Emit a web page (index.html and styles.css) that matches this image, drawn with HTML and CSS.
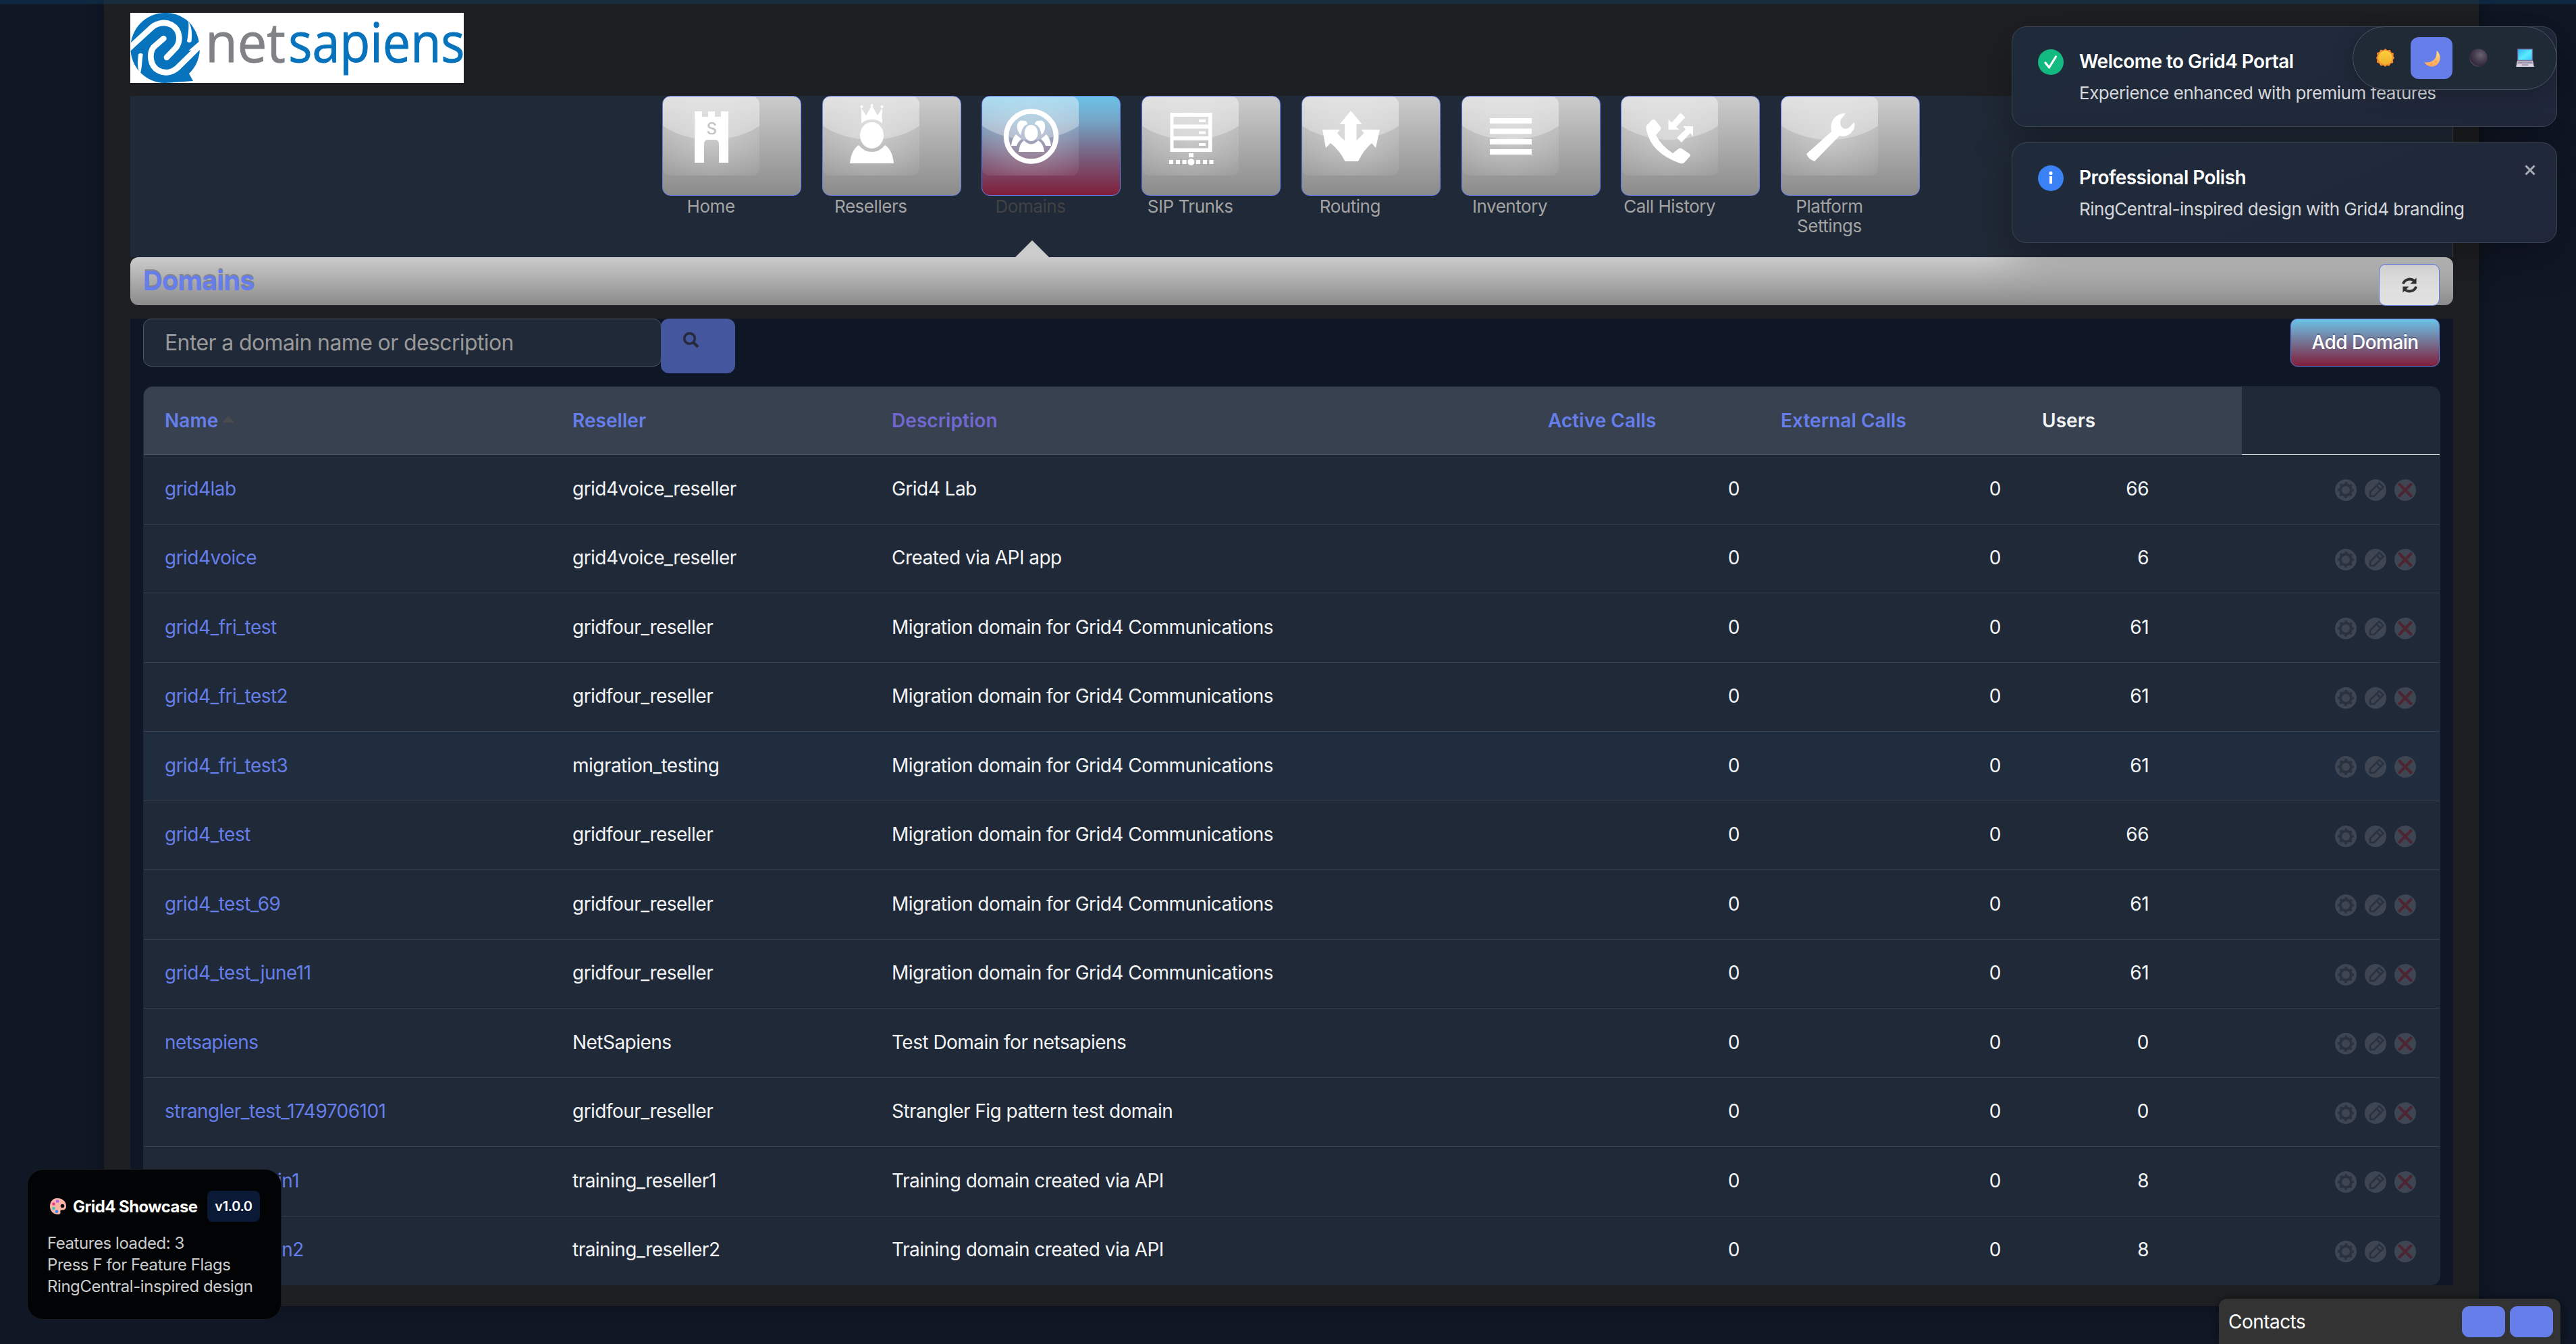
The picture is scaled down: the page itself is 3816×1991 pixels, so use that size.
FILE: index.html
```
<!DOCTYPE html>
<html lang="en">
<head>
<meta charset="utf-8">
<title>Domains</title>
<link rel="stylesheet" href="styles.css">
</head>
<body>
<svg class="defs" aria-hidden="true">
  <defs>
    <linearGradient id="gloss-top" x1="0" y1="0" x2="0" y2="1"><stop offset="0" stop-color="#fff" stop-opacity=".54"/><stop offset="1" stop-color="#fff" stop-opacity=".3"/></linearGradient>
    <radialGradient id="gloss-glow" cx=".5" cy=".55" r=".6"><stop offset="0" stop-color="#fff" stop-opacity=".32"/><stop offset="1" stop-color="#fff" stop-opacity=".07"/></radialGradient>
    <clipPath id="gloss-clip"><rect width="143" height="117" rx="11"/></clipPath>
    <clipPath id="logo-clip"><rect width="1482" height="312"/></clipPath>
    <linearGradient id="moon-fill" x1="0" y1="0" x2="0" y2="1"><stop offset="0" stop-color="#ffe27a"/><stop offset="1" stop-color="#ffa35c"/></linearGradient>
    <linearGradient id="screen-fill" x1="0" y1="0" x2="1" y2="1"><stop offset="0" stop-color="#2fb4f5"/><stop offset=".55" stop-color="#5ceaff"/><stop offset="1" stop-color="#39c8fb"/></linearGradient>
    <linearGradient id="sun-fill" x1="0" y1="0" x2="0" y2="1"><stop offset="0" stop-color="#ffcf3c"/><stop offset="1" stop-color="#eeb02c"/></linearGradient>
    <radialGradient id="dark-fill" cx=".62" cy=".35" r=".75"><stop offset="0" stop-color="#6a6271"/><stop offset=".5" stop-color="#463c4e"/><stop offset=".8" stop-color="#33283d"/><stop offset="1" stop-color="#6c6672"/></radialGradient>
    <symbol id="gloss" viewBox="0 0 143 117"><g clip-path="url(#gloss-clip)"><rect width="143" height="117" fill="url(#gloss-glow)"/><ellipse cx="71.500" cy="-18" rx="108" ry="82" fill="url(#gloss-top)"/></g></symbol>
    <symbol id="gear" viewBox="0 0 32 32"><circle cx="16" cy="16" r="16" fill="#3e4654"/><circle cx="16" cy="16" r="8" fill="none" stroke="#2a3240" stroke-width="4"/><circle cx="16" cy="16" r="10.500" fill="none" stroke="#2a3240" stroke-width="3" stroke-dasharray="3.600 4.647" stroke-dashoffset="1.800"/></symbol>
    <symbol id="pencil" viewBox="0 0 32 32"><circle cx="16" cy="16" r="16" fill="#3e4654"/><path d="M8 25v-6L21.500 5.500l6 6L14 25zM17.500 9.500l6 6" fill="none" stroke="#2a3240" stroke-width="2.600"/></symbol>
    <symbol id="cross" viewBox="0 0 32 32"><circle cx="16" cy="16" r="16" fill="#3e4654"/><path d="M7.500 7.500l17 17M24.500 7.500l-17 17" stroke="#4d2431" stroke-width="4.200" stroke-linecap="round"/></symbol>
  </defs>
</svg>

<div class="topline"></div>

<div class="wrapper">
  <header class="header">
    <svg class="logo" viewBox="0 0 1482 312" role="img" aria-label="netsapiens">
      <rect width="1482" height="312" fill="#fff"/>
      <path d="M154 0a153 156 0 0 1 110 44c20 22 36 52 41 84l-46 40 50-6c-2 50-24 86-48 108l18 33-125 9A153 156 0 0 1 154 0z" fill="#0873bd"/>
      <g clip-path="url(#logo-clip)" fill="none" stroke="#fff" stroke-width="26" stroke-linecap="round">
        <path d="M-8 160L88 72C112 46 152 36 184 54c36 20 42 68 20 100l-42 44"/>
        <path d="M318 138L222 232c-26 32-66 42-98 24-36-20-42-74-20-104l44-38"/>
      </g>
      <path d="M258 38c14 20 18 50 14 88-2 8-18 8-20 0 4-20 10-60 6-88z" fill="#fff"/>
      <path d="M44 272c-14-24-12-54-8-86 2-8 18-8 20 0-4 26-4 60-12 86z" fill="#fff"/>
      <text x="334" y="219" font-size="240" textLength="356" lengthAdjust="spacingAndGlyphs" fill="#808285" stroke="#808285" stroke-width="3">net</text>
      <text x="703" y="219" font-size="240" textLength="783" lengthAdjust="spacingAndGlyphs" fill="#0873bd" stroke="#0873bd" stroke-width="3">sapiens</text>
    </svg>
  </header>

  <nav class="nav">
    <a class="nav-item"><span class="tile"><svg viewBox="0 0 143 117"><use href="#gloss"/><path fill="#fff" d="M47 22h11v8h9v-8h10v8h9v-8h11v76H83V71q0-7-6-7H67q-6 0-6 7v27H47z"/><text class="tower-mark" x="72" y="56">S</text></svg></span><span class="nav-label">Home</span></a>
    <a class="nav-item"><span class="tile"><svg viewBox="0 0 143 117"><use href="#gloss"/><g fill="#fff"><path d="M57 40V17l7 11 8.500-15L81 28l7-11v23q-5-6-15.500-6T57 40z"/><circle cx="57.500" cy="15" r="2"/><circle cx="72.500" cy="13" r="2"/><circle cx="87.500" cy="15" r="2"/><ellipse cx="72.500" cy="57.500" rx="17.500" ry="19.500"/><path d="M40 99q2-20 13-27 8 10 19.500 10T92 72q11 7 13 27z"/></g></svg></span><span class="nav-label">Resellers</span></a>
    <a class="nav-item active"><span class="tile"><svg viewBox="0 0 143 117"><use href="#gloss"/><circle cx="72.500" cy="59" r="37" fill="none" stroke="#fff" stroke-width="7.500"/><g fill="#fff"><path d="M54 82q1-12 8-17 10 11 21 0 8 5 9 17z"/><ellipse cx="72.500" cy="54" rx="10" ry="12"/><path d="M62 36c-9-3-11 6-10 11 1 5 3 8 5 10 2-9 4-14 10-16 0-3-2-5-5-5zM83 36c9-3 11 6 10 11-1 5-3 8-5 10-2-9-4-14-10-16 0-3 2-5 5-5z"/><path d="M43 73q1-11 7-17l8 7q-5 4-7 10zM102 73q-1-11-7-17l-8 7q5 4 7 10z"/></g></svg></span><span class="nav-label">Domains</span></a>
    <a class="nav-item"><span class="tile"><svg viewBox="0 0 143 117"><use href="#gloss"/><path fill="#fff" fill-rule="evenodd" d="M41.500 24h62v58h-62zM46.500 30v11.500H98V30zM46.500 47.500V59H98V47.500zM46.500 65v11.500H98V65z"/><path fill="#fff" d="M84 34h10v4H84zM84 51.500h10v4H84zM84 69h10v4H84zM69 84h7v6h-7zM40 94h6v6h-6zM50 94h6v6h-6zM59.500 94h6v6h-6zM80 94h6v6h-6zM90 94h6v6h-6zM99.500 94h6v6h-6z"/><circle cx="72.500" cy="97" r="5" fill="#fff"/></svg></span><span class="nav-label">SIP Trunks</span></a>
    <a class="nav-item"><span class="tile"><svg viewBox="0 0 143 117"><use href="#gloss"/><path fill="#fff" d="M72 21l16.500 20H80.500v24q5-4 11-11l-4-5H115l-6 27-6-7q-12 10-20 27H63.500Q55 79 42 69l-7 7-5-27h26l-4 5q5 7 11 11V41H55.500z"/></svg></span><span class="nav-label">Routing</span></a>
    <a class="nav-item"><span class="tile"><svg viewBox="0 0 143 117"><use href="#gloss"/><path fill="#fff" d="M41 32h62v8H41zM41 47.500h62v8H41zM41 63h62v8H41zM41 78h62v8H41z"/></svg></span><span class="nav-label">Inventory</span></a>
    <a class="nav-item"><span class="tile"><svg viewBox="0 0 143 117"><use href="#gloss"/><path fill="#fff" d="M37 43l9-9q2-1 4 1l8 10q1 2 0 4l-7 8q8 16 25 27l9-7q2-1 4 0l12 8q2 2 0 4l-8 9q-3 2-6 1Q44 84 37 50q-1-4 0-7z"/><path fill="#fff" d="M69.500 34l5 4.500L87.500 24l7 7L81 45l4.500 4h-16zM106 44H91l4 4.500L82 61l7 7 13-14 4 5z"/></svg></span><span class="nav-label">Call History</span></a>
    <a class="nav-item"><span class="tile"><svg viewBox="0 0 143 117"><use href="#gloss"/><path fill="#fff" d="M49 96q-9-3-12-11l37-33q-3-13 5-21 7-7 16-6l-7 9q-3 7 3 13 5 2 9-1l8-8q2 9-5 16-8 7-17 4z"/></svg></span><span class="nav-label">Platform<br>Settings</span></a>
    <span class="nav-arrow"></span>
  </nav>

  <div class="titlebar">
    <h1 class="title">Domains</h1>
    <button class="refresh" aria-label="Refresh"><svg viewBox="0 0 26 26"><path d="M3 11A10.500 9.500 0 0 1 20 6M23 15A10.500 9.500 0 0 1 6 20" fill="none" stroke="#333" stroke-width="4"/><path d="M23.500 1.500v9.500H14zM2.500 24.500V15H12z" fill="#333"/></svg></button>
  </div>

  <main class="content">
    <div class="toolbar">
      <div class="search">
        <div class="search-input">Enter a domain name or description</div>
        <button class="search-btn" aria-label="Search"><svg viewBox="0 0 24 24"><circle cx="9.500" cy="9.500" r="7.800" fill="none" stroke="#262b3c" stroke-width="3.600"/><path d="M15.500 15.500l6.500 6.500" stroke="#262b3c" stroke-width="4.200"/></svg></button>
      </div>
      <button class="add-btn">Add Domain</button>
    </div>

    <div class="table-box">
      <table class="table">
        <colgroup><col class="c-name"><col class="c-reseller"><col class="c-desc"><col class="c-active"><col class="c-ext"><col class="c-users"><col></colgroup>
        <thead><tr><th>Name<i class="sort"></i></th><th>Reseller</th><th class="visited">Description</th><th>Active Calls</th><th>External Calls</th><th class="plain">Users</th><th class="blank"></th></tr></thead>
        <tbody>
          <tr><td><a>grid4lab</a></td><td>grid4voice_reseller</td><td>Grid4 Lab</td><td>0</td><td>0</td><td>66</td><td><svg><use href="#gear"/></svg><svg><use href="#pencil"/></svg><svg><use href="#cross"/></svg></td></tr>
          <tr><td><a>grid4voice</a></td><td>grid4voice_reseller</td><td>Created via API app</td><td>0</td><td>0</td><td>6</td><td><svg><use href="#gear"/></svg><svg><use href="#pencil"/></svg><svg><use href="#cross"/></svg></td></tr>
          <tr><td><a>grid4_fri_test</a></td><td>gridfour_reseller</td><td>Migration domain for Grid4 Communications</td><td>0</td><td>0</td><td>61</td><td><svg><use href="#gear"/></svg><svg><use href="#pencil"/></svg><svg><use href="#cross"/></svg></td></tr>
          <tr><td><a>grid4_fri_test2</a></td><td>gridfour_reseller</td><td>Migration domain for Grid4 Communications</td><td>0</td><td>0</td><td>61</td><td><svg><use href="#gear"/></svg><svg><use href="#pencil"/></svg><svg><use href="#cross"/></svg></td></tr>
          <tr class="hovered"><td><a>grid4_fri_test3</a></td><td>migration_testing</td><td>Migration domain for Grid4 Communications</td><td>0</td><td>0</td><td>61</td><td><svg><use href="#gear"/></svg><svg><use href="#pencil"/></svg><svg><use href="#cross"/></svg></td></tr>
          <tr><td><a>grid4_test</a></td><td>gridfour_reseller</td><td>Migration domain for Grid4 Communications</td><td>0</td><td>0</td><td>66</td><td><svg><use href="#gear"/></svg><svg><use href="#pencil"/></svg><svg><use href="#cross"/></svg></td></tr>
          <tr><td><a>grid4_test_69</a></td><td>gridfour_reseller</td><td>Migration domain for Grid4 Communications</td><td>0</td><td>0</td><td>61</td><td><svg><use href="#gear"/></svg><svg><use href="#pencil"/></svg><svg><use href="#cross"/></svg></td></tr>
          <tr><td><a>grid4_test_june11</a></td><td>gridfour_reseller</td><td>Migration domain for Grid4 Communications</td><td>0</td><td>0</td><td>61</td><td><svg><use href="#gear"/></svg><svg><use href="#pencil"/></svg><svg><use href="#cross"/></svg></td></tr>
          <tr><td><a>netsapiens</a></td><td>NetSapiens</td><td>Test Domain for netsapiens</td><td>0</td><td>0</td><td>0</td><td><svg><use href="#gear"/></svg><svg><use href="#pencil"/></svg><svg><use href="#cross"/></svg></td></tr>
          <tr><td><a>strangler_test_1749706101</a></td><td>gridfour_reseller</td><td>Strangler Fig pattern test domain</td><td>0</td><td>0</td><td>0</td><td><svg><use href="#gear"/></svg><svg><use href="#pencil"/></svg><svg><use href="#cross"/></svg></td></tr>
          <tr><td><a>trainingdomain1</a></td><td>training_reseller1</td><td>Training domain created via API</td><td>0</td><td>0</td><td>8</td><td><svg><use href="#gear"/></svg><svg><use href="#pencil"/></svg><svg><use href="#cross"/></svg></td></tr>
          <tr><td><a>trainingdomain2</a></td><td>training_reseller2</td><td>Training domain created via API</td><td>0</td><td>0</td><td>8</td><td><svg><use href="#gear"/></svg><svg><use href="#pencil"/></svg><svg><use href="#cross"/></svg></td></tr>
        </tbody>
      </table>
    </div>
  </main>
</div>

<div class="toasts">
  <div class="toast">
    <span class="toast-icon success"><svg viewBox="0 0 38 38"><path d="M11 20l5.500 7L26.500 11" fill="none" stroke="#fff" stroke-width="3.200" stroke-linecap="round" stroke-linejoin="round"/></svg></span>
    <div class="toast-text"><strong>Welcome to Grid4 Portal</strong><span>Experience enhanced with premium features</span></div>
  </div>
  <div class="toast">
    <span class="toast-icon info"><svg viewBox="0 0 38 38"><path d="M19 16v11" stroke="#fff" stroke-width="4"/><circle cx="19" cy="11.500" r="2.600" fill="#fff"/></svg></span>
    <div class="toast-text"><strong>Professional Polish</strong><span>RingCentral-inspired design with Grid4 branding</span></div>
    <svg class="toast-close" viewBox="0 0 16 16"><path d="M1.500 1.500l13 13M14.500 1.500l-13 13" stroke="#a7acb3" stroke-width="3"/></svg>
  </div>
</div>

<div class="themes">
  <span class="theme"><svg viewBox="0 0 28 28"><path d="M14 0l3.200 2.700 4.100-1 1.700 3.900 4 1.600-.7 4.200 1.700 2.900-2.300 3.400.6 4.200-4.100 1.300-2.100 3.500-4-.8L14 28l-3.200-2.400-4 .8-1.900-3.600-4-1.500.5-4L0 14.300l1.800-3.500L1 6.600l4-1.400 1.700-3.700 4.100 1z" fill="#f58a2c"/><circle cx="14" cy="14" r="10.800" fill="url(#sun-fill)"/></svg></span>
  <span class="theme on"><svg viewBox="0 0 28 28"><path d="M21.500 3c5 4 7 12 3 18.500C20 29 9 30.500 2 21c9 1.500 16-2.500 18-8 1.200-3.500 1.500-6.500 1.500-10z" fill="url(#moon-fill)"/><circle cx="20" cy="20" r="2" fill="#f39a4c" opacity=".6"/><circle cx="13" cy="24" r="1.400" fill="#f39a4c" opacity=".6"/></svg></span>
  <span class="theme"><svg viewBox="0 0 28 28"><circle cx="14" cy="14" r="13.700" fill="url(#dark-fill)"/></svg></span>
  <span class="theme"><svg viewBox="0 0 28 28"><rect x="2" y="0" width="24" height="18.500" rx="1" fill="#6d5b93"/><rect x="3.400" y="1.400" width="21.200" height="16" fill="url(#screen-fill)"/><path d="M2 18.500h24l1.800 9.500H.2z" fill="#d8d2e2"/><path d="M3 19.600h22l.6 3.400H2.400z" fill="#9c93ab"/><path d="M9 24.300h10v1.600H9z" fill="#8b8199"/></svg></span>
</div>

<div class="showcase">
  <div class="showcase-head">
    <svg class="palette" viewBox="0 0 26 26"><path d="M12 1C5 1 1 6.500 1 13c0 7 5 12 11.500 12 3.500 0 4.500-1.500 4-3.500-.6-2 .5-3 2.500-3 4 0 6-2 6-6C25 5.500 19 1 12 1z" fill="#f9b4a5"/><circle cx="19.500" cy="12.500" r="2.800" fill="#0b0508"/><circle cx="12" cy="5.500" r="2.300" fill="#b65cf0"/><circle cx="6.500" cy="9.500" r="2.300" fill="#f0388e"/><circle cx="6.500" cy="16" r="2.300" fill="#3fc4bd"/><circle cx="11" cy="20.800" r="2.300" fill="#2f8df5"/></svg>
    <strong>Grid4 Showcase</strong>
    <span class="version">v1.0.0</span>
  </div>
  <div class="showcase-lines"><div>Features loaded: 3</div><div>Press F for Feature Flags</div><div>RingCentral-inspired design</div></div>
</div>

<div class="contacts">
  <span class="contacts-label">Contacts</span>
  <span class="contacts-btn"></span>
  <span class="contacts-btn"></span>
</div>
</body>
</html>
```
FILE: styles.css
```
* { box-sizing: border-box; }

html, body { height: 100%; }

body {
  margin: 0;
  overflow: hidden;
  background: #101725;
  color: #f3f4f6;
  font-family: Inter, "Liberation Sans", sans-serif;
  font-size: 28px;
  letter-spacing: -.530px;
  position: relative;
}

button { font: inherit; letter-spacing: inherit; padding: 0; margin: 0; }
svg { display: block; }
.defs { position: absolute; width: 0; height: 0; }

.topline {
  position: absolute;
  inset: 0 0 auto 0;
  height: 6px;
  background: rgba(14, 65, 105, .4);
  z-index: 2;
}

/* Page column */
.wrapper {
  width: 3518px;
  height: 1935px;
  margin-left: 154px;
  padding: 0 38px 0 39px;
  background: #1e1f22;
  box-shadow: 0 0 24px rgba(0, 0, 0, .3);
}

.header { height: 142px; padding-top: 19px; }
.logo { width: 494px; height: 104px; overflow: visible; letter-spacing: 0; font-family: "Open Sans", sans-serif; }

/* Main navigation */
.nav {
  position: relative;
  height: 239px;
  display: flex;
  justify-content: center;
  gap: 30.700px;
  padding-right: 1px;
  background: #202937;
  border-right: 1px solid #3c4450;
}
.nav-item { width: 206px; }
.tile {
  display: block;
  height: 148px;
  border: 1px solid #667eea;
  border-radius: 12px;
  background: linear-gradient(#ccc, #8b8b8b);
}
.active .tile { background: linear-gradient(#6bc3e8, #75a4c4 25%, #79607f 60%, #801f3b); }
.tile svg { width: 143px; height: 117px; }
.tower-mark { font-size: 24px; text-anchor: middle; fill: #c4c4c4; font-weight: 500; }
.nav-label {
  display: block;
  width: 144px;
  padding-top: 1px;
  text-align: center;
  font-size: 26px;
  letter-spacing: -.460px;
  line-height: 29px;
  color: #a3a3a3;
}
.active .nav-label { color: #404244; }
.nav-arrow {
  position: absolute;
  left: 1311px;
  bottom: 0;
  border: 25px solid transparent;
  border-top: 0;
  border-bottom-color: #ccc;
}

/* Title bar */
.titlebar {
  height: 71px;
  display: flex;
  justify-content: space-between;
  align-items: flex-start;
  padding: 10px 20px 0 19px;
  border-radius: 12px;
  background: linear-gradient(#ccc, #8b8b8b);
}
.title {
  margin: 1px 0 0;
  font-size: 40px;
  letter-spacing: -.950px;
  line-height: 48px;
  font-weight: 700;
  color: #667eea;
  text-shadow: 0 -2px 0 rgba(90, 90, 90, .5);
}
.refresh {
  width: 90px;
  height: 62px;
  display: grid;
  place-items: center;
  border: 1px solid #667eea;
  border-radius: 10px;
  background: linear-gradient(#e6e6e6, #e0e0e0);
}
.refresh svg { width: 25px; height: 25px; }

/* Content */
.content { margin-top: 20px; height: 1432px; padding: 0 19px; background: #0f1726; }
.toolbar { display: flex; justify-content: space-between; align-items: flex-start; height: 100px; }
.search { display: flex; align-items: flex-start; }
.search-input {
  width: 768px;
  height: 71px;
  padding: 0 31px;
  display: flex;
  align-items: center;
  border: 1px solid #4b5563;
  border-radius: 12px;
  background: #1f2937;
  color: #999;
  font-size: 32px;
  letter-spacing: -.620px;
}
.search-btn {
  width: 110px;
  height: 81px;
  margin-left: -1px;
  padding: 20px 0 0 33px;
  display: flex;
  align-items: flex-start;
  border: 0;
  border-radius: 12px;
  background: #44569d;
}
.search-btn svg { width: 24px; height: 24px; }
.add-btn {
  width: 221px;
  height: 71px;
  margin-right: 1px;
  border: 1px solid #667eea;
  border-radius: 10px;
  background: linear-gradient(#6bc3e8, #801f3b);
  color: #fff;
  font-weight: 500;
  text-shadow: 0 -2px 0 rgba(0, 0, 0, .25);
  padding-bottom: 2px;
}

.table-box {
  height: 1332px;
  border: 1px solid #1f2937;
  border-radius: 14px;
  background: #1f2937;
  overflow: hidden;
}
.table { width: 100%; table-layout: fixed; border-collapse: separate; border-spacing: 0; }
.c-name { width: 605px; }
.c-reseller { width: 473px; }
.c-desc { width: 972px; }
.c-active { width: 345px; }
.c-ext { width: 387px; }
.c-users { width: 326px; }

th {
  height: 101px;
  padding: 0 30px 1px;
  text-align: left;
  font-size: 28px;
  font-weight: 600;
  letter-spacing: .050px;
  color: #667eea;
  background: #384150;
  border-bottom: 1px solid #4b5563;
}
.visited { color: #7068cf; }
.plain { color: #f3f4f6; }
.blank { background: none; border-bottom-color: #e5e7eb; }
.sort {
  display: inline-block;
  margin-left: 6px;
  vertical-align: 7px;
  border: 9px solid transparent;
  border-top: 0;
  border-bottom: 10px solid #494a4e;
}

td {
  height: 103px;
  padding: 0 30px 3px;
  border-bottom: 1px solid #374151;
  white-space: nowrap;
}
tr:nth-child(even) td { height: 102px; padding-bottom: 4px; }
tr:last-child td { border-bottom-color: transparent; }
.hovered td { background: #202d3e; }
td a { color: #667eea; }
tr td:first-child, tr th:first-child { padding-left: 31px; }
td:nth-child(4), td:nth-child(5), td:nth-child(6) { text-align: right; padding-right: 31px; }
td:nth-child(6) { padding-right: 138px; }
tr td:last-child, tr:nth-child(even) td:last-child { padding: 2px 35px 0 0; text-align: right; font-size: 0; letter-spacing: 0; }
td svg { display: inline-block; width: 32px; height: 32px; margin-left: 12px; }

/* Notifications */
.toasts {
  position: absolute;
  top: 39px;
  right: 28px;
  width: 808px;
  display: grid;
  gap: 23px;
}
.toast {
  position: relative;
  height: 149px;
  display: flex;
  gap: 23px;
  padding: 33px 38px;
  border: 1px solid #3b4553;
  border-radius: 22px;
  background: linear-gradient(155deg, #1f2b3b, #20293a 60%, #20273b);
  box-shadow: 0 20px 64px rgba(0, 0, 0, .3);
}
.toast-icon { width: 38px; height: 38px; border-radius: 50%; flex: none; }
.success { background: #12b981; }
.info { background: #3b82f6; }
.toast-text { display: flex; flex-direction: column; white-space: nowrap; }
.toast-text strong { font-size: 28px; font-weight: 600; line-height: 36px; color: #fff; }
.toast-text span { font-size: 26px; letter-spacing: -.500px; line-height: 36px; margin-top: 11px; color: #d5d7db; }
.toast-close { position: absolute; top: 32px; right: 31px; width: 16px; height: 16px; }

.themes {
  position: absolute;
  top: 39px;
  right: 28px;
  width: 303px;
  height: 94px;
  display: flex;
  gap: 7px;
  padding: 15px 16px;
  border: 1px solid #4b5563;
  border-radius: 47px;
  background: #202936;
  box-shadow: 0 8px 32px rgba(0, 0, 0, .2);
}
.theme { width: 62px; height: 62px; padding-top: 1px; display: grid; place-items: center; border-radius: 12px; }
.theme svg { width: 27px; height: 27px; margin-top: -3px; }
.on { background: #667eea; }

/* Feature panel */
.showcase {
  position: absolute;
  left: 40px;
  top: 1732px;
  width: 377px;
  height: 223px;
  padding: 31px 29px;
  border: 1px solid #1b1c1f;
  border-radius: 24px;
  background: #020305;
}
.showcase-head { display: flex; align-items: center; height: 46px; font-size: 24px; }
.palette { width: 26px; height: 26px; margin: 0 9px 0 3px; }
.showcase-head strong { font-weight: 700; letter-spacing: -.580px; color: #fff; white-space: nowrap; }
.version {
  margin-left: auto;
  margin-right: 2px;
  width: 78px;
  height: 46px;
  display: grid;
  place-items: center;
  border-radius: 8px;
  background: #0a1a36;
  color: #fff;
  font-size: 20px;
  letter-spacing: -.380px;
  font-weight: 600;
}
.showcase-lines { margin-top: 16px; font-size: 24px; letter-spacing: -.440px; line-height: 32px; color: #cbcccd; white-space: nowrap; }

/* Contacts dock */
.contacts {
  position: absolute;
  left: 3287px;
  bottom: 0;
  width: 506px;
  height: 67px;
  display: flex;
  align-items: flex-start;
  gap: 7px;
  padding: 11px 11px 0 14px;
  border-radius: 12px 12px 0 0;
  background: #333;
  box-shadow: 0 0 12px rgba(0, 0, 0, .4);
}
.contacts-label { flex: 1; line-height: 46px; color: #fff; }
.contacts-btn { width: 64px; height: 46px; border-radius: 11px; background: #667eea; }
```
